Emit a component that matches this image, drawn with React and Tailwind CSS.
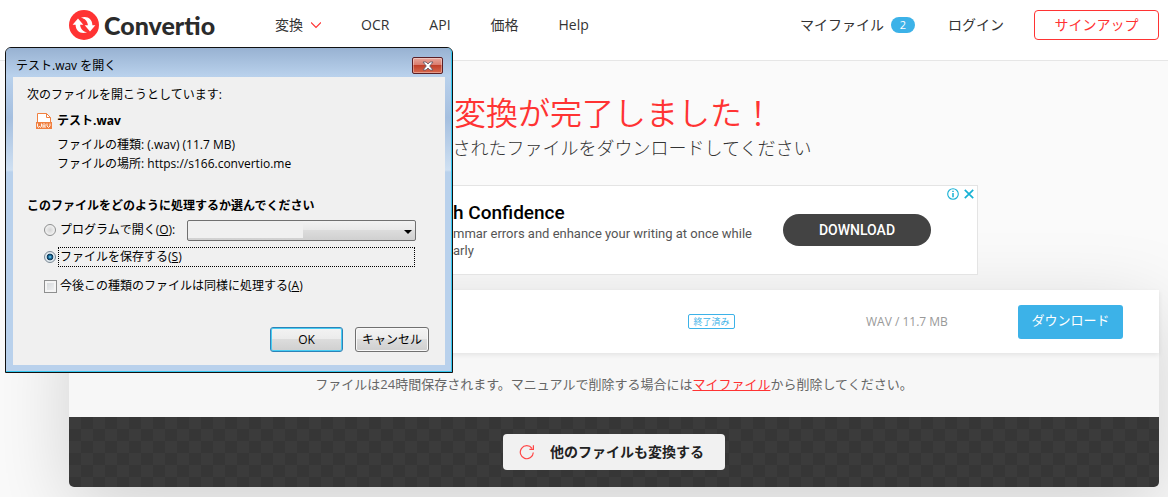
import React from "react";

function LogoMark() {
  return (
    <svg viewBox="0 0 30 30" className="size-[30px] shrink-0" aria-hidden="true">
      <circle cx="15" cy="15" r="15" fill="#ff3333" />
      <path
        fill="#fff"
        d="M3.600 14.700 9 8.600l5.300 6.100h-3.200c.3 4.200 3 6.900 7 7.600C11.600 24.400 6.700 21 6.600 14.700z"
      />
      <path
        fill="#fff"
        d="M26.400 15.300 21 21.400l-5.300-6.100h3.200c-.3-4.200-3-6.900-7-7.600 6.500-2.100 11.400 1.300 11.500 7.600z"
      />
    </svg>
  );
}

function Header() {
  const link = "text-[14px] leading-5 text-[#333]";
  return (
    <header className="flex h-[61px] items-start border-b border-[#e6e6e6] bg-white pl-[69px] pr-[9px] pt-2.5">
      <div className="flex h-[30px] w-full items-center">
        <a href="#home" className="flex w-[147px] items-center gap-[5px]">
          <LogoMark />
          <span className="font-['Lato_Black','Lato',sans-serif] text-[25px] font-black leading-[30px] text-[#2b2b2b]">
            Convertio
          </span>
        </a>
        <nav className="ml-[59px] flex items-center gap-10">
          <a href="#convert" className={`${link} flex items-center gap-2`}>
            変換
            <svg viewBox="1 0 10 8" className="h-2 w-2.5" fill="none" stroke="#ff3333" strokeWidth="1.200" aria-hidden="true">
              <path d="M1 1.500 6 6.500 11 1.500" />
            </svg>
          </a>
          <a href="#ocr" className={link}>OCR</a>
          <a href="#api" className={link}>API</a>
          <a href="#pricing" className={link}>価格</a>
          <a href="#help" className={link}>Help</a>
        </nav>
        <div className="ml-auto flex items-center">
          <a href="#files" className={`${link} flex items-center gap-[7px]`}>
            マイファイル
            <span className="flex h-4 w-6 items-center justify-center rounded-full bg-[#3cb2e8] text-[11px] leading-4 text-white">
              2
            </span>
          </a>
          <a href="#login" className={`${link} ml-[33px]`}>ログイン</a>
          <button
            type="button"
            className="ml-[30px] h-[30px] w-[125px] rounded-[4px] border border-[#ff3333] bg-white text-[14px] leading-5 text-[#ff3333]"
          >
            サインアップ
          </button>
        </div>
      </div>
    </header>
  );
}

function Ad() {
  const rows = "flex whitespace-pre";
  const lead = "w-[180px] text-right";
  return (
    <section className="relative mx-auto mt-[22px] flex h-[90px] w-[728px] items-center border border-[#e4e4e4] bg-white pl-[22px] pr-[46px] font-['Roboto',sans-serif]">
      <div className="pb-px">
        <h2 className={`${rows} text-[19px] font-medium leading-6 text-black`}>
          <span className={lead}>Write Wit</span>h Confidence
        </h2>
        <p className={`${rows} text-[13px] leading-[17px] text-[#555]`}>
          <span className={lead}>Fix gra</span>mmar errors and enhance your writing at once while
        </p>
        <p className={`${rows} text-[13px] leading-[17px] text-[#555]`}>
          <span className={lead}>writing cle</span>arly
        </p>
      </div>
      <button
        type="button"
        className="ml-auto h-8 w-[148px] rounded-full bg-[#434343] text-[14px] font-medium leading-5 text-white"
      >
        DOWNLOAD
      </button>
      <div className="absolute right-0.5 top-0.5 flex items-center gap-1">
        <button type="button" aria-label="広告について">
          <svg viewBox="0 0 12 12" className="size-3" fill="none" stroke="#17b1d4">
            <circle cx="6" cy="6" r="5.300" strokeWidth="1.100" />
            <path d="M6 5v4.200M6 2.700v1.300" strokeWidth="1.500" />
          </svg>
        </button>
        <button type="button" aria-label="広告を閉じる">
          <svg viewBox="0 0 12 12" className="size-3" fill="none" stroke="#17b1d4" strokeWidth="1.700">
            <path d="m1.800 1.800 8.400 8.400m0-8.400-8.400 8.400" />
          </svg>
        </button>
      </div>
    </section>
  );
}

function FilePanel() {
  return (
    <section className="mt-[15px] rounded-b-[5px] shadow-[0_20px_80px_rgba(0,0,0,0.17)]">
      <div className="relative flex h-[63px] items-center bg-white pr-9 shadow-[0_2px_5px_rgba(0,0,0,0.08)]">
        <span className="ml-auto w-[47px] rounded-[2px] border border-[#3cb2e8] text-center text-[9px] leading-[13px] text-[#3cb2e8]">
          終了済み
        </span>
        <span className="ml-[131px] w-[82px] whitespace-nowrap text-[12px] leading-5 text-[#999]">
          WAV / 11.7 MB
        </span>
        <button
          type="button"
          className="ml-[70px] h-[34px] w-[105px] rounded-[3px] bg-[#3cb2e8] pb-1 text-[13px] leading-5 text-white"
        >
          ダウンロード
        </button>
      </div>
      <p className="flex h-16 items-center justify-center bg-[#f7f7f7] pb-0.5 text-[13px] leading-5 text-[#666]">
        ファイルは24時間保存されます。マニュアルで削除する場合には
        <a href="#files" className="text-[#ff3333] underline">マイファイル</a>
        から削除してください。
      </p>
      <div className="flex h-[70px] items-center justify-center rounded-b-[5px] bg-[#383838] bg-[repeating-conic-gradient(#363636_0_25%,#3b3b3b_0_50%)] bg-[length:24px_24px]">
        <button
          type="button"
          className="flex h-9 w-[222px] items-center gap-[15px] rounded-[4px] bg-[#f1f1f1] pl-4 text-[14px] font-bold leading-5 text-[#222]"
        >
          <svg viewBox="0 0 16 16" className="size-4" fill="none" stroke="#ff4747" strokeWidth="1.200" aria-hidden="true">
            <path d="M14.300 8.500A6.500 6.500 0 1 1 13 4.300M14.400 1.300v4h-4" />
          </svg>
          他のファイルも変換する
        </button>
      </div>
    </section>
  );
}

function WavIcon() {
  return (
    <svg viewBox="0 0 16 16" className="size-4 shrink-0" fill="none" stroke="#f08040" aria-hidden="true">
      <path d="M1.500 9V.5h9l4 4V9" fill="#fff" />
      <path d="M10.500.5v4h4" />
      <path d="M0 9h16v7H0z" fill="#f08040" stroke="none" />
      <path
        d="M1.500 10.500v3l1 1 1-1.500 1 1.500 1-1v-3M7 15v-3.500l1-1 1 1V15M7 13h2M11 10.500v2.500l1.500 1.500L14 13v-2.500"
        stroke="#fff"
        strokeWidth=".9"
      />
    </svg>
  );
}

function DownloadDialog() {
  return (
    <div
      role="dialog"
      aria-labelledby="dialog-title"
      className="absolute left-[5px] top-[47px] w-[448px] rounded-t-[6px] border border-[#111] bg-[#b9d1ec] text-[12px] text-black"
    >
      <div className="rounded-t-[5px] border-b border-r border-[#35c8f0] bg-[linear-gradient(180deg,#98b2d2_0,#b9d1ec_28px,#a5bfdf_70px,#cfe0f2_122px,#b9d1ec_124px)] pb-1.5 pl-[7px] pr-1.5">
        <div className="flex h-[29px] items-center justify-between pl-[3px] pr-0.5">
          <h1 id="dialog-title" className="pt-1.5 leading-4">テスト.wav を開く</h1>
          <button
            type="button"
            aria-label="閉じる"
            className="mt-[9px] flex h-[17px] w-[31px] items-center justify-center self-start rounded-[2px] border border-[#5a1f26] bg-[linear-gradient(180deg,#e8a79c_0,#d9796b_48%,#c0402a_50%,#d8694f_100%)] shadow-[inset_0_0_0_1px_rgba(255,255,255,0.35)]"
          >
            <svg viewBox="0 0 12 10" className="h-2.5 w-3" aria-hidden="true">
              <path
                d="M1 1h3l2 2 2-2h3L7.700 5 11 9H8L6 7 4 9H1l3.300-4z"
                fill="#fff"
                stroke="#5b5566"
                strokeWidth=".8"
              />
            </svg>
          </button>
        </div>
        <div className="h-[288px] bg-[#f0f0f0] pl-3.5 pt-2.5">
          <p className="leading-4">次のファイルを開こうとしています:</p>
          <div className="mt-2.5 flex items-center gap-[5px] pl-[9px]">
            <WavIcon />
            <strong className="leading-4">テスト.wav</strong>
          </div>
          <div className="mt-1.5 pl-[30px] leading-[19px]">
            <p>ファイルの種類: (.wav) (11.7 MB)</p>
            <p>ファイルの場所: https://s166.convertio.me</p>
          </div>
          <p className="mt-[25px] font-bold leading-4">このファイルをどのように処理するか選んでください</p>
          <div className="mt-[5px] flex h-[22px] items-center pl-[17px]">
            <input
              type="radio"
              name="action"
              id="open-with"
              className="size-3 shrink-0 appearance-none rounded-full border border-[#8e8f8f] bg-[radial-gradient(circle,#d4d4d4_0,#f6f6f6_80%)]"
            />
            <label htmlFor="open-with" className="w-[131px] pl-1 leading-4">
              プログラムで開く(<u>O</u>):
            </label>
            <span className="relative">
              <select
                aria-label="プログラム"
                className="block h-[21px] w-[229px] appearance-none rounded-[2px] border border-[#707070] bg-[linear-gradient(90deg,#f0f0f0_115px,transparent_115px),linear-gradient(180deg,#f2f2f2_0,#e8e8e8_48%,#dcdcdc_50%,#d0d0d0_100%)] bg-[length:100%_17px,100%_100%] bg-no-repeat"
              />
              <svg viewBox="0 0 8 4" className="pointer-events-none absolute right-1 top-[10px] h-1 w-2" aria-hidden="true">
                <path d="M0 0h8L4 4z" />
              </svg>
            </span>
          </div>
          <div className="mt-[5px] flex h-[22px] items-center pl-[17px]">
            <input
              type="radio"
              name="action"
              id="save-file"
              defaultChecked
              className="size-3 shrink-0 appearance-none rounded-full border border-[#7d8a96] bg-[radial-gradient(circle_at_50%_50%,#7fdcf7_0,#1c6f9f_22%,#0e3552_42%,#dfe8ee_52%)]"
            />
            <label
              htmlFor="save-file"
              className="ml-0.5 w-[357px] border border-dotted border-black pl-px leading-[18px]"
            >
              ファイルを保存する(<u>S</u>)
            </label>
          </div>
          <div className="mt-[7px] flex h-[22px] items-center pl-[17px]">
            <input
              type="checkbox"
              id="remember"
              className="size-[13px] shrink-0 appearance-none border border-[#8e8f8f] bg-[linear-gradient(135deg,#cfd3d6,#f6f6f6)] shadow-[inset_0_0_0_2px_#f4f4f4]"
            />
            <label htmlFor="remember" className="pl-[3px] leading-4">
              今後この種類のファイルは同様に処理する(<u>A</u>)
            </label>
          </div>
          <div className="mt-[30px] flex justify-end gap-3 pr-4">
            <button
              type="button"
              className="h-[25px] w-[73px] rounded-[3px] border border-[#2d83b8] bg-[linear-gradient(180deg,#f3f3f3_0,#ebebeb_48%,#dcdcdc_50%,#cfcfcf_100%)] leading-4 shadow-[inset_0_0_0_1px_#48cdf3]"
            >
              OK
            </button>
            <button
              type="button"
              className="h-[25px] w-[74px] rounded-[3px] border border-[#707070] bg-[linear-gradient(180deg,#f3f3f3_0,#ebebeb_48%,#dcdcdc_50%,#cfcfcf_100%)] leading-4 shadow-[inset_0_0_0_1px_#f8f8f8]"
            >
              キャンセル
            </button>
          </div>
        </div>
      </div>
    </div>
  );
}

export default function App() {
  return (
    <div className="relative min-h-screen overflow-hidden bg-[#fafafa] font-['Open_Sans','Noto_Sans_CJK_JP',sans-serif]">
      <Header />
      <main className="pb-2.5 pl-[69px] pr-[9px] pt-8">
        <h1 className="text-center text-[32px] font-[350] leading-10 text-[#ff3333]">変換が完了しました！</h1>
        <p className="text-center text-[18px] font-light leading-[30px] text-[#333]">
          変換されたファイルをダウンロードしてください
        </p>
        <Ad />
        <FilePanel />
      </main>
      <DownloadDialog />
    </div>
  );
}
